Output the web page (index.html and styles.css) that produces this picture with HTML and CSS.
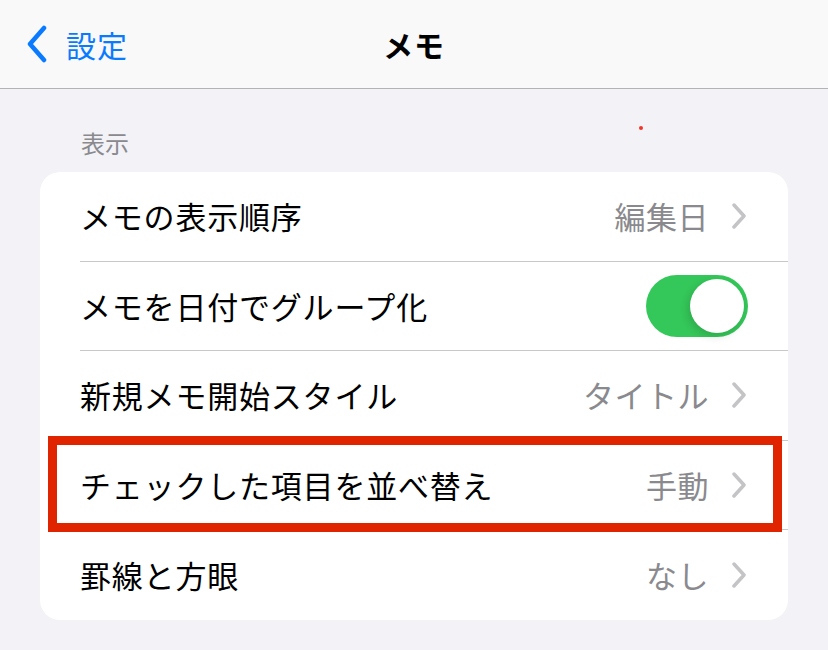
FILE: index.html
```html
<!DOCTYPE html>
<html lang="ja">
<head>
    <meta charset="UTF-8">
    <meta name="viewport" content="width=device-width, initial-scale=1.0">
    <title>メモ</title>
    <link rel="stylesheet" href="styles.css">
</head>
<body>
    <div class="nav-bar">
        <div class="nav-back">
            <svg class="back-chevron" width="24" height="38" viewBox="0 0 24 38">
                <path d="M19 3 L5 19 L19 35" fill="none" stroke="#0a7aff" stroke-width="4.5" stroke-linecap="round" stroke-linejoin="round"/>
            </svg>
            <span>設定</span>
        </div>
        <div class="nav-title">メモ</div>
    </div>

    <div class="content">
        <span class="red-dot"></span>
        <div class="section-label">表示</div>

        <div class="group">
            <div class="row">
                <div class="row-inner">
                    <span class="row-label">メモの表示順序</span>
                    <span class="row-value">編集日</span>
                    <svg class="chevron" width="14" height="26" viewBox="0 0 14 26"><path d="M2 2 L12 13 L2 24" fill="none" stroke="#c4c4c7" stroke-width="3.5" stroke-linecap="round" stroke-linejoin="round"/></svg>
                </div>
            </div>
            <div class="row">
                <div class="row-inner">
                    <span class="row-label">メモを日付でグループ化</span>
                    <div class="toggle on"><span class="knob"></span></div>
                </div>
            </div>
            <div class="row">
                <div class="row-inner">
                    <span class="row-label">新規メモ開始スタイル</span>
                    <span class="row-value">タイトル</span>
                    <svg class="chevron" width="14" height="26" viewBox="0 0 14 26"><path d="M2 2 L12 13 L2 24" fill="none" stroke="#c4c4c7" stroke-width="3.5" stroke-linecap="round" stroke-linejoin="round"/></svg>
                </div>
            </div>
            <div class="row highlighted">
                <div class="row-inner">
                    <span class="row-label">チェックした項目を並べ替え</span>
                    <span class="row-value">手動</span>
                    <svg class="chevron" width="14" height="26" viewBox="0 0 14 26"><path d="M2 2 L12 13 L2 24" fill="none" stroke="#c4c4c7" stroke-width="3.5" stroke-linecap="round" stroke-linejoin="round"/></svg>
                </div>
                <div class="highlight-box"></div>
            </div>
            <div class="row">
                <div class="row-inner">
                    <span class="row-label">罫線と方眼</span>
                    <span class="row-value">なし</span>
                    <svg class="chevron" width="14" height="26" viewBox="0 0 14 26"><path d="M2 2 L12 13 L2 24" fill="none" stroke="#c4c4c7" stroke-width="3.5" stroke-linecap="round" stroke-linejoin="round"/></svg>
                </div>
            </div>
        </div>
    </div>
</body>
</html>
```

FILE: styles.css
```css
* {
    margin: 0;
    padding: 0;
    box-sizing: border-box;
}

body {
    font-family: "Noto Sans CJK JP", "Noto Sans", sans-serif;
    background: #f2f2f7;
    color: #000;
    width: 828px;
    height: 650px;
    overflow: hidden;
}

.nav-bar {
    height: 89px;
    background: #f9f9fa;
    border-bottom: 1px solid #b3b3b7;
    display: flex;
    align-items: center;
    justify-content: center;
    position: relative;
}

.nav-back {
    position: absolute;
    left: 25px;
    top: 24px;
    display: flex;
    align-items: center;
    gap: 17px;
    color: #0a7aff;
    font-size: 30px;
    line-height: 40px;
    letter-spacing: 1px;
}

.nav-title {
    font-size: 30px;
    font-weight: 700;
    line-height: 40px;
    letter-spacing: 1px;
}

.content {
    position: relative;
    padding: 37px 40px 0;
}

.red-dot {
    position: absolute;
    left: 639px;
    top: 37px;
    width: 4px;
    height: 4px;
    border-radius: 50%;
    background: #f0372a;
}

.section-label {
    font-size: 24px;
    line-height: 34px;
    color: #8a8a8e;
    padding-left: 41px;
    margin-bottom: 12px;
}

.group {
    background: #fff;
    border-radius: 20px;
}

.row {
    position: relative;
    padding-left: 40px;
}

.row-inner {
    height: 89.6px;
    display: flex;
    align-items: center;
    padding-right: 42px;
    border-bottom: 1px solid #c8c8cb;
}

.row:last-child .row-inner {
    border-bottom: none;
}

.row-label {
    flex: 1;
    font-size: 31px;
    line-height: 40px;
    letter-spacing: 0.8px;
}

.row-value {
    font-size: 31px;
    line-height: 40px;
    color: #8a8a8e;
    letter-spacing: 0.5px;
    margin-right: 23px;
}

.chevron {
    display: block;
}

.toggle {
    width: 102px;
    height: 62px;
    border-radius: 31px;
    background: #e9e9eb;
    position: relative;
    margin-right: -2px;
}

.toggle.on {
    background: #34c759;
}

.knob {
    position: absolute;
    top: 4px;
    right: 4px;
    width: 54px;
    height: 54px;
    border-radius: 50%;
    background: #fff;
    box-shadow: -2px 3px 8px rgba(0, 0, 0, 0.15);
}

.highlight-box {
    position: absolute;
    left: 8px;
    right: 6px;
    top: -5px;
    bottom: -2px;
    border: 9px solid #e12400;
}
```
